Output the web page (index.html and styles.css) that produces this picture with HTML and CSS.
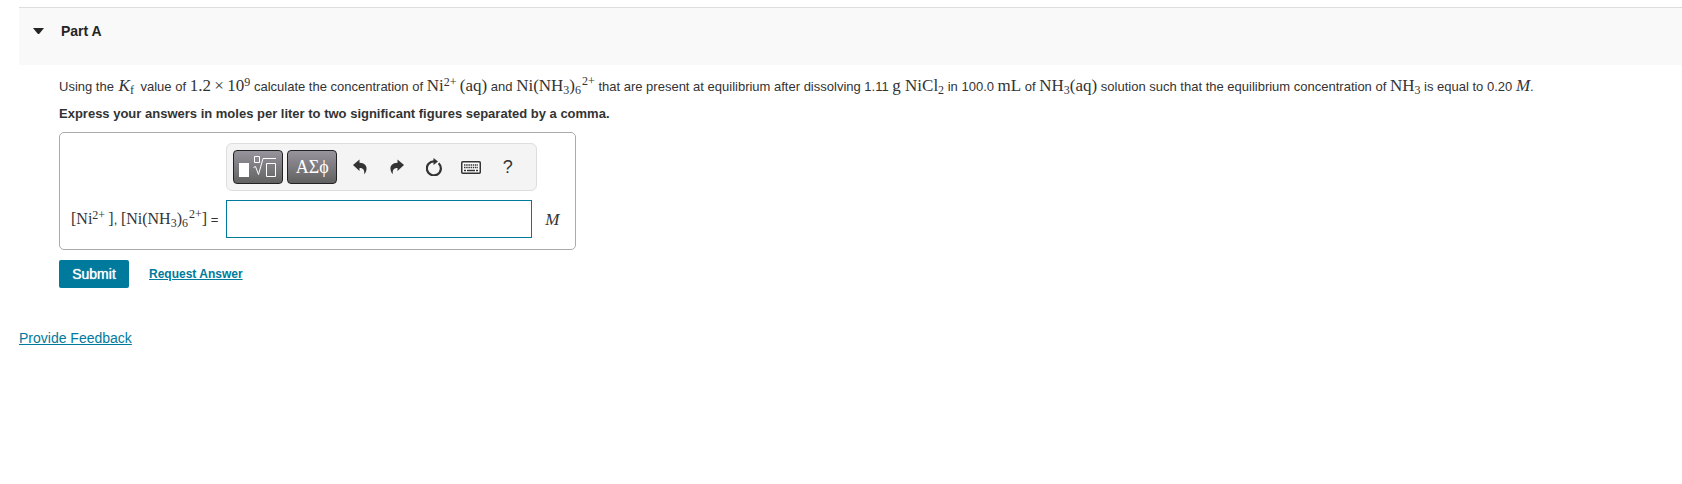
FILE: index.html
```html
<!DOCTYPE html>
<html lang="en">
<head>
  <meta charset="UTF-8" />
  <meta name="viewport" content="width=device-width, initial-scale=1.0"/>
  <title>Part A</title>
  <link rel="stylesheet" href="styles.css">
</head>
<body>
  <!-- Part header -->
  <header class="part-header">
    <button class="toggle" type="button" aria-label="Collapse part" aria-expanded="true">
      <svg width="11" height="6" viewBox="0 0 11 6"><path d="M0 0h11L6.500 5.400q-1 1-2 0z" fill="#252525"/></svg>
    </button>
    <h2 class="part-title">Part A</h2>
  </header>

  <main class="part-body">
    <p class="question">Using the <span class="math k"><i>K</i><sub>f</sub></span> value of <span class="math">1.2&thinsp;×&thinsp;10<sup>9</sup></span> calculate the concentration of <span class="math">Ni<sup>2+</sup>&thinsp;(aq)</span> and <span class="math">Ni(NH<sub>3</sub>)<sub>6</sub><sup class="charge">2+</sup></span> that are present at equilibrium after dissolving 1.11 <span class="math">g NiCl<sub>2</sub></span> in 100.0 <span class="math">mL</span> of <span class="math">NH<sub>3</sub>(aq)</span> solution such that the equilibrium concentration of <span class="math">NH<sub>3</sub></span> is equal to 0.20 <span class="math"><i>M</i></span>.</p>
    <p class="instructions">Express your answers in moles per liter to two significant figures separated by a comma.</p>

    <!-- Answer box -->
    <form class="answer">
      <div class="answer-box">
        <div class="toolbar">
          <button class="template" type="button" aria-label="Templates">
            <svg width="38" height="22" viewBox="0 0 38 22" fill="none" stroke="#fff">
              <path d="M0 7h10v14H0z" fill="#fff" stroke="none"/>
              <path d="M15.500 .5h5v6h-5z"/>
              <path d="M14.500 11.500l2-1 3 8 4.500-16h13"/>
              <path d="M27.500 7.500h9v13h-9z"/>
            </svg>
          </button>
          <button class="template" type="button" aria-label="Symbols">ΑΣϕ</button>
          <button class="tool" type="button" aria-label="Undo">
            <svg width="14" height="16" viewBox="0 0 14 16"><path d="M0 6L6.500 .5v3.200c5 0 7.500 3 7 6.500-.2 2.200-1.200 4-2.500 5 .8-3.500-.3-6.200-4.500-6.200v3z" fill="#333"/></svg>
          </button>
          <button class="tool" type="button" aria-label="Redo">
            <svg width="14" height="16" viewBox="0 0 14 16"><path d="M14 6L7.500 .5v3.200c-5 0-7.500 3-7 6.500.2 2.200 1.200 4 2.500 5-.8-3.500.3-6.200 4.500-6.200v3z" fill="#333"/></svg>
          </button>
          <button class="tool" type="button" aria-label="Reset">
            <svg width="16" height="18" viewBox="0 0 16 18"><path d="M12.600 5.200A7 7 0 1 1 8.500 3.400" fill="none" stroke="#333" stroke-width="2.200"/><path d="M7.500 0l4.500 3.500-4.500 3.500z" fill="#333"/></svg>
          </button>
          <button class="tool" type="button" aria-label="Keyboard shortcuts">
            <svg width="20" height="13" viewBox="0 0 20 13"><rect x=".75" y=".75" width="18.500" height="11.500" rx="1" fill="#fff" stroke="#333" stroke-width="1.500"/><path d="M3 4h14M3 6.500h14" stroke="#333" stroke-width="1.500" stroke-dasharray="1.500 .7"/><path d="M3 9.500h2m1 0h8m1 0h2" stroke="#333" stroke-width="1.500"/></svg>
          </button>
          <button class="tool help" type="button" aria-label="Help">?</button>
        </div>
        <label class="answer-label" for="answer"><span class="math">[Ni<sup>2+</sup>&thinsp;]</span>, <span class="math">[Ni(NH<sub>3</sub>)<sub>6</sub><sup class="charge">2+</sup>]</span> =</label>
        <input class="answer-input" id="answer" type="text">
        <span class="math unit"><i>M</i></span>
      </div>
      <div class="actions">
        <button class="submit" type="submit">Submit</button>
        <a class="request" href="#">Request Answer</a>
      </div>
    </form>
  </main>

  <footer class="feedback">
    <a href="#">Provide Feedback</a>
  </footer>
</body>
</html>
```
FILE: styles.css
```css
* {
  box-sizing: border-box;
}

body {
  margin: 0;
  padding: 7px 0 0 19px;
  background-color: #fff;
  color: #333;
  font-family: "Liberation Sans", Arial, sans-serif;
  font-size: 13px;
}

button {
  padding: 0;
  border: none;
  background: none;
  color: inherit;
  font-family: inherit;
  cursor: pointer;
}

a {
  color: #007a9c;
}

.part-header {
  display: flex;
  align-items: flex-start;
  gap: 17px;
  height: 58px;
  padding: 15px 14px 0;
  border-top: 1px solid #ddd;
  background-color: #f9f9f9;
}

.toggle {
  display: flex;
  align-items: center;
  height: 16px;
}

.part-title {
  margin: 0;
  color: #252525;
  font-size: 14px;
  line-height: 16px;
}

.part-body {
  padding: 8px 40px 0;
}

.question,
.instructions {
  margin: 0;
  line-height: 27px;
}

.instructions {
  font-weight: bold;
}

.math {
  font-family: "Liberation Serif", "Times New Roman", serif;
  font-size: 17px;
  font-weight: normal;
  line-height: 1;
  white-space: nowrap;
}

.k {
  margin: 0 3px 0 1px;
}

.math sub,
.math sup {
  font-size: 12px;
  line-height: 0;
}

.math sub {
  vertical-align: -3px;
}

.math sup {
  vertical-align: 5px;
}

.math .charge {
  margin-left: 1px;
  vertical-align: 6px;
}

.answer-box {
  display: grid;
  grid-template-columns: max-content 306px max-content;
  align-items: center;
  width: max-content;
  margin-top: 5px;
  padding: 10px 16px 11px 11px;
  border: 1px solid #aaa;
  border-radius: 5px;
}

.toolbar {
  grid-column: 2 / 4;
  display: flex;
  align-items: center;
  gap: 4px;
  width: 311px;
  height: 48px;
  margin-bottom: 9px;
  padding: 0 6px;
  border: 1px solid #ddd;
  border-radius: 6px;
  background-color: #f4f4f4;
}

.template {
  display: flex;
  align-items: center;
  justify-content: center;
  width: 50px;
  height: 34px;
  border: 1px solid #222;
  border-radius: 4px;
  background-image: linear-gradient(#97949d, #616161);
  color: #fff;
  font-family: "Liberation Serif", "Times New Roman", serif;
  font-size: 18px;
}

.tool {
  display: flex;
  align-items: center;
  justify-content: center;
  width: 33px;
  height: 34px;
}

.template + .tool {
  margin-left: 2px;
}

.help {
  font-size: 18px;
}

.answer-label {
  padding-right: 8px;
}

.answer-label .math {
  font-size: 16px;
}

.answer-input {
  width: 100%;
  height: 38px;
  padding: 0 8px;
  border: 1px solid #007a9c;
  font-size: 16px;
}

.unit {
  padding-left: 13px;
}

.actions {
  display: flex;
  align-items: center;
  gap: 20px;
  margin-top: 10px;
}

.submit {
  width: 70px;
  height: 28px;
  border-radius: 2px;
  background-color: #007a9c;
  color: #fff;
  font-size: 14px;
  text-shadow: 0 0 1px #fff;
}

.request {
  font-size: 12px;
  font-weight: bold;
}

.feedback {
  margin-top: 42px;
  font-size: 14px;
}
```
